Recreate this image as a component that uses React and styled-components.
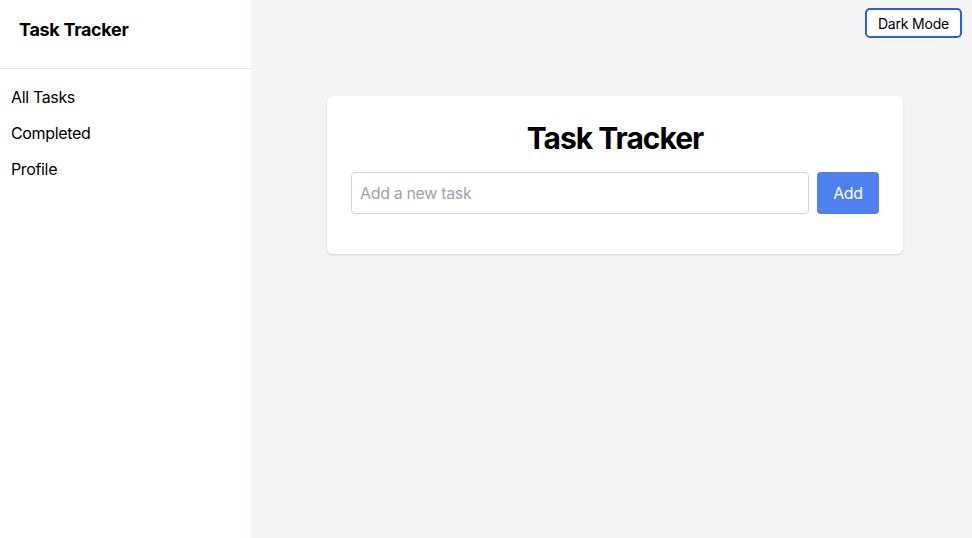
import React, { useState } from 'react';
import styled, { createGlobalStyle } from 'styled-components';

const GlobalStyle = createGlobalStyle`
  html, body, #root {
    margin: 0;
    padding: 0;
    height: 100%;
  }
  body {
    font-family: Inter, "Noto Sans", "Liberation Sans", sans-serif;
    color: #000;
  }
  * {
    box-sizing: border-box;
  }
`;

const Layout = styled.div`
  display: flex;
  height: 100vh;
  position: relative;
`;

const Sidebar = styled.aside`
  width: 251px;
  flex-shrink: 0;
  background: #fff;
  display: flex;
  flex-direction: column;
`;

const SidebarHeader = styled.div`
  height: 69px;
  padding: 17px 19px 0;
  border-bottom: 1px solid #e5e7eb;
`;

const Brand = styled.h2`
  margin: 0;
  font-size: 18px;
  line-height: 26px;
  font-weight: 700;
  letter-spacing: -0.3px;
`;

const Nav = styled.nav`
  display: flex;
  flex-direction: column;
  padding-top: 10px;
`;

const NavItem = styled.a`
  display: block;
  padding: 6px 11px;
  font-size: 16px;
  line-height: 24px;
  letter-spacing: -0.35px;
  color: #000;
  text-decoration: none;
  cursor: pointer;
`;

const Main = styled.main`
  flex: 1;
  background: #f3f4f6;
  display: flex;
  justify-content: center;
  align-items: flex-start;
  padding: 96px 0 0 7px;
`;

const ThemeToggle = styled.button`
  position: absolute;
  top: 8px;
  right: 10px;
  height: 30px;
  padding: 0 11px;
  background: #fff;
  border: 2px solid #2a5fd3;
  border-radius: 5px;
  font-family: inherit;
  font-size: 14px;
  letter-spacing: -0.2px;
  color: #000;
  cursor: pointer;
`;

const Card = styled.section`
  width: 576px;
  background: #fff;
  border-radius: 6px;
  box-shadow: 0 1px 3px rgba(0, 0, 0, 0.1), 0 1px 2px rgba(0, 0, 0, 0.06);
  padding: 24px 24px 40px;
`;

const Title = styled.h1`
  margin: 0 0 16px;
  font-size: 30px;
  line-height: 36px;
  font-weight: 700;
  letter-spacing: -1px;
  text-align: center;
`;

const Form = styled.form`
  display: flex;
  gap: 8px;
`;

const TaskInput = styled.input`
  flex: 1;
  height: 42px;
  padding: 0 8px;
  border: 1px solid #d1d5db;
  border-radius: 4px;
  font-family: inherit;
  font-size: 16px;
  letter-spacing: -0.35px;
  color: #111;
  outline: none;

  &::placeholder {
    color: #9ca3af;
  }
`;

const AddButton = styled.button`
  width: 62px;
  height: 42px;
  border: none;
  border-radius: 4px;
  background: #4e80ee;
  color: #fff;
  font-family: inherit;
  font-size: 16px;
  letter-spacing: -0.3px;
  cursor: pointer;
`;

export default function App() {
  const [value, setValue] = useState('');
  const [tasks, setTasks] = useState([]);

  const addTask = (e) => {
    e.preventDefault();
    if (!value.trim()) return;
    setTasks([...tasks, value.trim()]);
    setValue('');
  };

  return (
    <>
      <GlobalStyle />
      <Layout>
        <Sidebar>
          <SidebarHeader>
            <Brand>Task Tracker</Brand>
          </SidebarHeader>
          <Nav>
            <NavItem>All Tasks</NavItem>
            <NavItem>Completed</NavItem>
            <NavItem>Profile</NavItem>
          </Nav>
        </Sidebar>
        <Main>
          <Card>
            <Title>Task Tracker</Title>
            <Form onSubmit={addTask}>
              <TaskInput
                placeholder="Add a new task"
                value={value}
                onChange={(e) => setValue(e.target.value)}
              />
              <AddButton type="submit">Add</AddButton>
            </Form>
          </Card>
        </Main>
        <ThemeToggle>Dark Mode</ThemeToggle>
      </Layout>
    </>
  );
}
